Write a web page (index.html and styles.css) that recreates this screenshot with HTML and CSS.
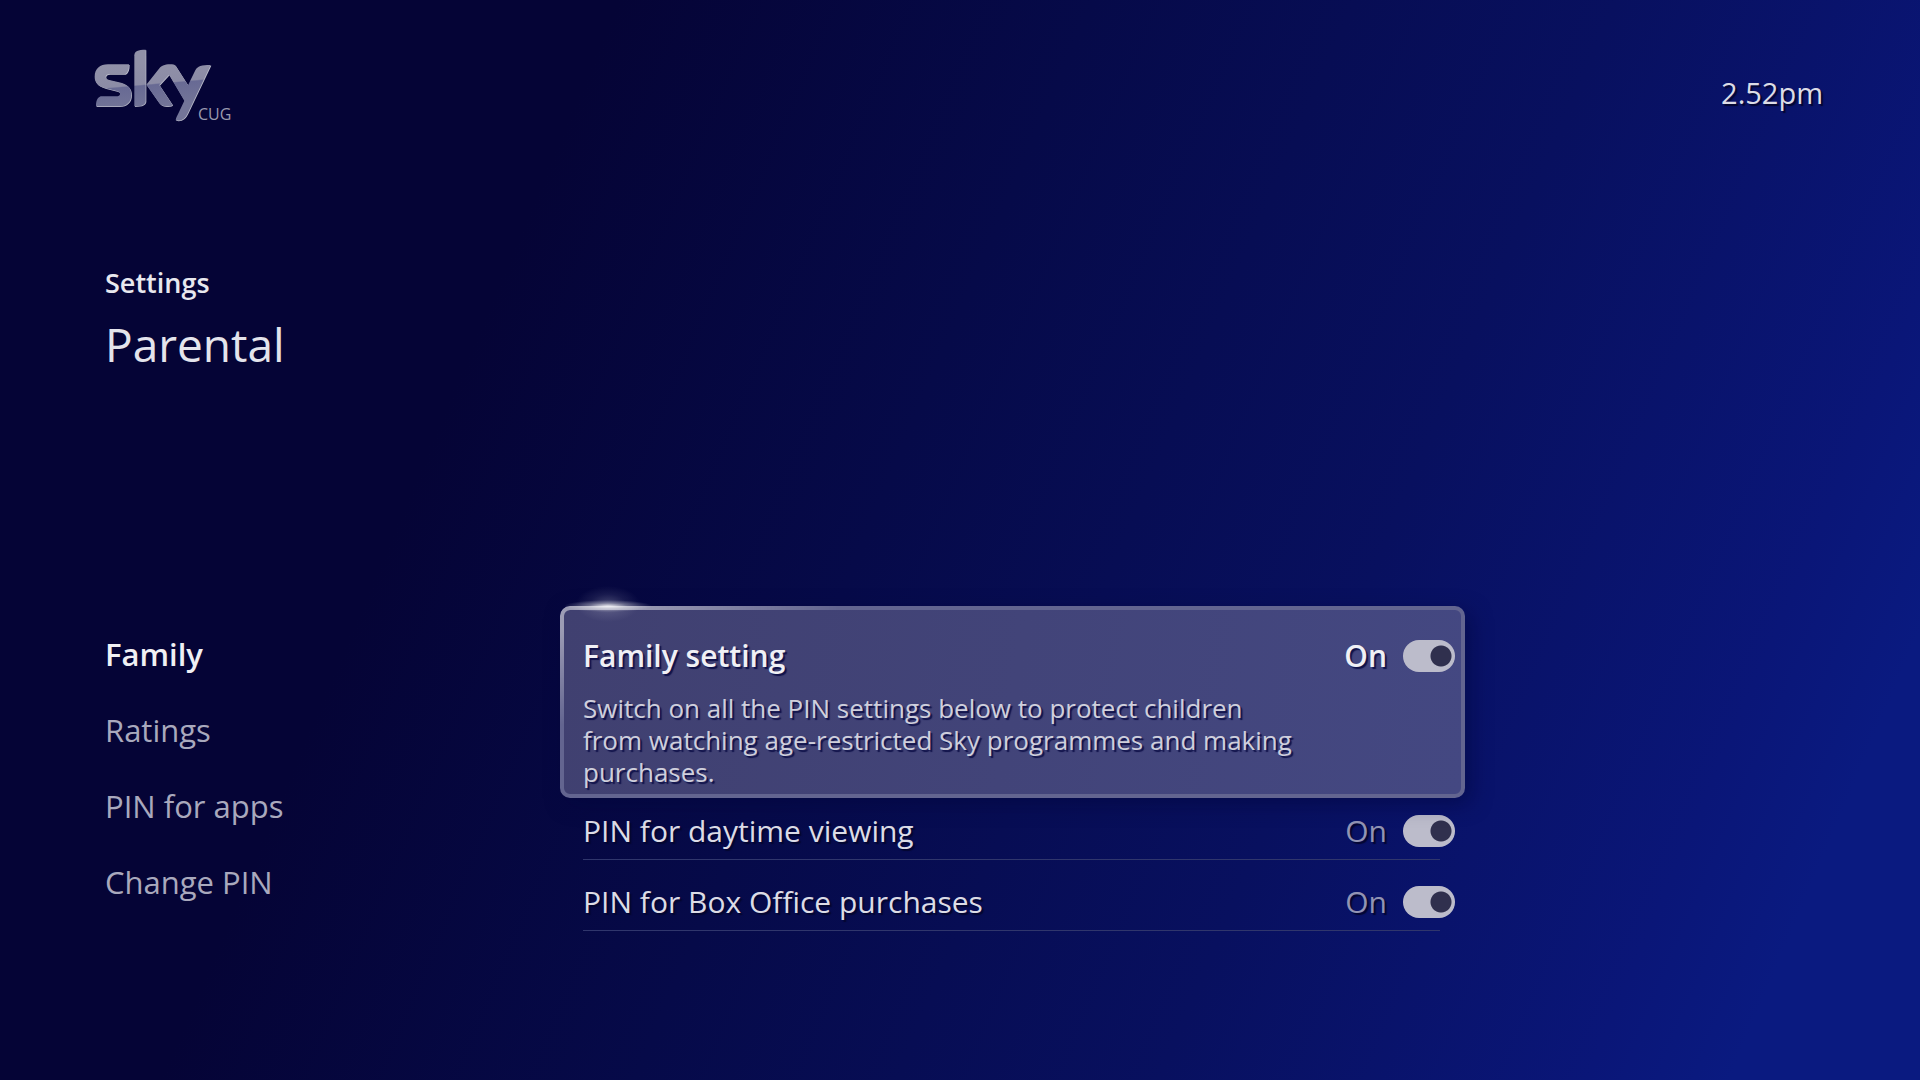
FILE: index.html
```html
<!DOCTYPE html>
<html lang="en">
<head>
<meta charset="utf-8">
<title>Settings – Parental</title>
<link rel="stylesheet" href="styles.css">
</head>
<body>
<header class="topbar">
  <div class="brand">
    <svg class="brand-logo" viewBox="40 41 354 219" role="img" aria-label="Sky">
      <defs>
        <linearGradient id="tone" gradientUnits="userSpaceOnUse" x1="190" y1="80" x2="202" y2="215">
          <stop offset="0" stop-color="#9191a8"/>
          <stop offset=".49" stop-color="#8c8ca6"/>
          <stop offset=".52" stop-color="#686a94"/>
          <stop offset="1" stop-color="#737598"/>
        </linearGradient>
        <g id="mark">
          <path d="M145 87C145 102 142 111 134 116H87C71 116 71 131 86 134L115 141C140 146 152 158 152 178C152 200 138 213 115 213H46C46 198 49 188 60 183H106C122 183 122 170 108 167L75 159C52 153 42 142 42 124C42 100 58 87 82 87Z"/>
          <path d="M161 60C161 48 172 43 195 43V196C195 208 185 213 161 213Z"/>
          <path d="M197 148L235 100C245 88 257 87 274 87C281 87 284 90 287 95L322 150L344 105C351 92 362 89 390 89L322 232C312 252 304 257 285 255C286 246 290 240 294 232L311 196L265 118L236 149L275 208C274 212 270 213 262 213C246 213 240 209 234 201Z"/>
        </g>
      </defs>
      <use href="#mark" x="2" y="2" fill="#b9bac8"/>
      <use href="#mark" fill="url(#tone)"/>
    </svg>
    <span class="brand-tag">CUG</span>
  </div>
  <time class="clock" datetime="14:52">2.52pm</time>
</header>

<div class="heading">
  <p class="section">Settings</p>
  <h1 class="title">Parental</h1>
</div>

<div class="content">
  <nav class="menu">
    <a class="menu-item menu-item-active" href="#family">Family</a>
    <a class="menu-item" href="#ratings">Ratings</a>
    <a class="menu-item" href="#apps">PIN for apps</a>
    <a class="menu-item" href="#pin">Change PIN</a>
  </nav>
  <main class="options">
    <section class="card">
      <div class="card-row">
        <label class="option-name" for="family-setting">Family setting</label>
        <span class="state">On</span>
        <input class="switch" type="checkbox" id="family-setting" checked>
      </div>
      <p class="card-text">Switch on all the PIN settings below to protect children from watching age-restricted Sky programmes and making purchases.</p>
    </section>
    <div class="row">
      <label class="option-name" for="daytime">PIN for daytime viewing</label>
      <span class="state">On</span>
      <input class="switch" type="checkbox" id="daytime" checked>
    </div>
    <div class="row">
      <label class="option-name" for="box-office">PIN for Box Office purchases</label>
      <span class="state">On</span>
      <input class="switch" type="checkbox" id="box-office" checked>
    </div>
  </main>
</div>
</body>
</html>
```
FILE: styles.css
```css
* { box-sizing: border-box; }

body {
  margin: 0;
  min-height: 100vh;
  padding: 49px 97px 0 105px;
  font-family: "Open Sans", "Noto Sans", sans-serif;
  font-size: 30px;
  font-weight: 400;
  color: #dcdce6;
  background: linear-gradient(113deg, #050436 0%, #050436 26%, #060a49 46%, #08105f 68%, #0a1678 86%, #0a1a80 92%);
}

h1, p { margin: 0; }

.topbar {
  display: flex;
  justify-content: space-between;
  align-items: flex-start;
  height: 80px;
  margin-left: -11px;
}

.brand { display: flex; align-items: flex-end; }
.brand-logo { width: 118px; height: 73px; }
.brand-tag {
  margin-left: -14px;
  font-size: 16px;
  line-height: 16px;
  color: #9a9aae;
}

.clock {
  padding-top: 24px;
  font-size: 29px;
  line-height: 40px;
  text-shadow: 2px 2px 1px #04062f;
}

.heading { padding-top: 136px; }
.section {
  font-size: 27px;
  line-height: 36px;
  font-weight: 600;
  color: #e8e8ee;
}
.title {
  margin-top: 13px;
  font-size: 46px;
  line-height: 60px;
  font-weight: 400;
  color: #e4e4ec;
}

.content {
  display: grid;
  grid-template-columns: 455fr 905fr 358fr;
  margin-top: 232px;
}

.menu { display: flex; flex-direction: column; align-items: flex-start; padding-top: 10px; }
.menu-item {
  font-size: 31px;
  line-height: 76px;
  color: #a9a9bd;
  text-decoration: none;
}
.menu-item-active { font-weight: 600; color: #f0f0f4; }

.options { display: flex; flex-direction: column; gap: 13px; }

.card {
  position: relative;
  margin-bottom: -9px;
  padding: 30px 6px 6px 19px;
  border: 4px solid #636590;
  border-radius: 10px;
  background: linear-gradient(100deg, #404070, #444882);
  box-shadow: 6px 6px 20px #02063c80;
  text-shadow: 2px 2px 1px #10124a;
}
.card::before {
  content: "";
  position: absolute;
  inset: -4px;
  border: 4px solid #9c9cb4;
  border-radius: 10px;
  mask-image: radial-gradient(260px 120px at 20px 0, #000 20%, transparent);
}
.card::after {
  content: "";
  position: absolute;
  left: -14px;
  top: -31px;
  width: 120px;
  height: 56px;
  background:
    radial-gradient(44px 6px at 58px 27px, #ffffffd9, #ffffff59 45%, transparent),
    radial-gradient(32px 18px at 58px 25px, #ffffff40, #ffffff14 55%, transparent);
}

.card-row, .row { display: flex; align-items: center; }
.card-row { height: 32px; }
.option-name { flex: 1; line-height: 40px; }
.card-row .option-name, .card-row .state { font-weight: 600; color: #f0f0f5; }
.card-text {
  max-width: 720px;
  margin-top: 20px;
  font-size: 26px;
  line-height: 32px;
  color: #cfcfdc;
}

.row {
  height: 58px;
  padding: 0 10px 0 23px;
  background: linear-gradient(#30366c, #30366c) 23px 100% / calc(100% - 48px) 1px no-repeat;
  text-shadow: 2px 2px 1px #04062f;
}
.state { margin-right: 16px; line-height: 40px; color: #9294b4; }

.switch {
  appearance: none;
  flex: none;
  width: 52px;
  height: 32px;
  margin: 0;
  border-radius: 16px;
  background: radial-gradient(circle at 38px 16px, #30304e 10px, #bcbccb 11px);
}
.switch:not(:checked) {
  background: radial-gradient(circle at 14px 16px, #30304e 10px, #8788a4 11px);
}
```
